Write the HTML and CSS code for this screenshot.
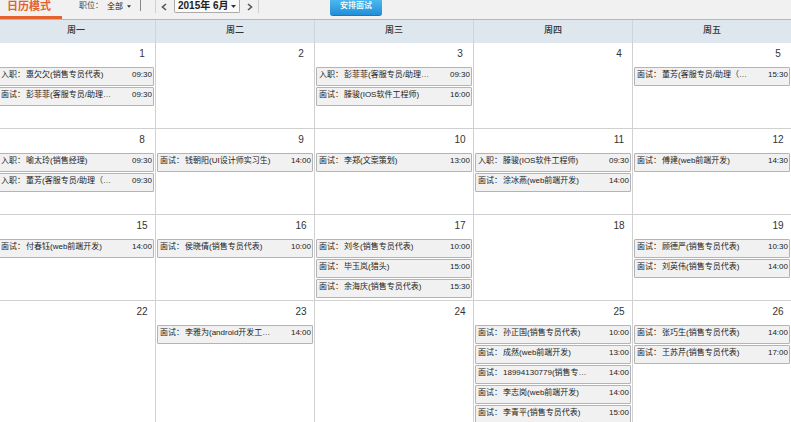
FILE: index.html
```html
<!DOCTYPE html>
<html lang="zh-CN">
<head>
<meta charset="utf-8">
<title>日历模式</title>
<meta name="viewport" content="width=device-width, initial-scale=1">
<link rel="stylesheet" href="styles.css">
</head>
<body>
<header class="toolbar">
  <a class="tab" href="#calendar">日历模式</a>
  <div class="filter">
    <label for="position">职位：</label>
    <span class="picker">
      <select id="position"><option>全部</option></select>
      <svg class="caret" viewBox="0 0 5 3" aria-hidden="true"><path d="M0 0h5L2.500 3z"/></svg>
    </span>
  </div>
  <span class="divider"></span>
  <div class="pager">
    <button class="step prev" type="button" aria-label="上个月"><svg viewBox="0 0 6 8"><path d="M5 1 1.500 4 5 7"/></svg></button>
    <span class="picker month">
      <select aria-label="月份"><option>2015年 6月</option></select>
      <svg class="caret" viewBox="0 0 5 3" aria-hidden="true"><path d="M0 0h5L2.500 3z"/></svg>
    </span>
    <button class="step next" type="button" aria-label="下个月"><svg viewBox="0 0 6 8"><path d="M1 1 4.500 4 1 7"/></svg></button>
  </div>
  <button class="primary" type="button">安排面试</button>
</header>
<main class="sheet" id="calendar">
<table class="calendar">
  <thead>
    <tr><th>周一</th><th>周二</th><th>周三</th><th>周四</th><th>周五</th></tr>
  </thead>
  <tbody>
    <tr>
      <td><div class="day">1</div>
        <div class="event"><span class="kind">入职：</span><span class="who">惠欠欠(销售专员代表)</span><time>09:30</time></div>
        <div class="event"><span class="kind">面试：</span><span class="who">彭菲菲(客服专员/助理…</span><time>09:30</time></div></td>
      <td><div class="day">2</div></td>
      <td><div class="day">3</div>
        <div class="event"><span class="kind">入职：</span><span class="who">彭菲菲(客服专员/助理…</span><time>09:30</time></div>
        <div class="event"><span class="kind">面试：</span><span class="who">滕骏(IOS软件工程师)</span><time>16:00</time></div></td>
      <td><div class="day">4</div></td>
      <td><div class="day">5</div>
        <div class="event"><span class="kind">面试：</span><span class="who">董芳(客服专员/助理（…</span><time>15:30</time></div></td>
    </tr>
    <tr>
      <td><div class="day">8</div>
        <div class="event"><span class="kind">入职：</span><span class="who">喻太玲(销售经理)</span><time>09:30</time></div>
        <div class="event"><span class="kind">入职：</span><span class="who">董芳(客服专员/助理（…</span><time>09:30</time></div></td>
      <td><div class="day">9</div>
        <div class="event"><span class="kind">面试：</span><span class="who">钱朝阳(UI设计师实习生)</span><time>14:00</time></div></td>
      <td><div class="day">10</div>
        <div class="event"><span class="kind">面试：</span><span class="who">李郑(文案策划)</span><time>13:00</time></div></td>
      <td><div class="day">11</div>
        <div class="event"><span class="kind">入职：</span><span class="who">滕骏(IOS软件工程师)</span><time>09:30</time></div>
        <div class="event"><span class="kind">面试：</span><span class="who">涂冰燕(web前端开发)</span><time>14:00</time></div></td>
      <td><div class="day">12</div>
        <div class="event"><span class="kind">面试：</span><span class="who">傅建(web前端开发)</span><time>14:30</time></div></td>
    </tr>
    <tr>
      <td><div class="day">15</div>
        <div class="event"><span class="kind">面试：</span><span class="who">付春钰(web前端开发)</span><time>14:00</time></div></td>
      <td><div class="day">16</div>
        <div class="event"><span class="kind">面试：</span><span class="who">侯晓倩(销售专员代表)</span><time>10:00</time></div></td>
      <td><div class="day">17</div>
        <div class="event"><span class="kind">面试：</span><span class="who">刘冬(销售专员代表)</span><time>10:00</time></div>
        <div class="event"><span class="kind">面试：</span><span class="who">毕玉岚(猎头)</span><time>15:00</time></div>
        <div class="event"><span class="kind">面试：</span><span class="who">余海庆(销售专员代表)</span><time>15:30</time></div></td>
      <td><div class="day">18</div></td>
      <td><div class="day">19</div>
        <div class="event"><span class="kind">面试：</span><span class="who">顾德严(销售专员代表)</span><time>10:30</time></div>
        <div class="event"><span class="kind">面试：</span><span class="who">刘英伟(销售专员代表)</span><time>14:00</time></div></td>
    </tr>
    <tr>
      <td><div class="day">22</div></td>
      <td><div class="day">23</div>
        <div class="event"><span class="kind">面试：</span><span class="who">李雅为(android开发工…</span><time>14:00</time></div></td>
      <td><div class="day">24</div></td>
      <td><div class="day">25</div>
        <div class="event"><span class="kind">面试：</span><span class="who">孙正国(销售专员代表)</span><time>10:00</time></div>
        <div class="event"><span class="kind">面试：</span><span class="who">成然(web前端开发)</span><time>13:00</time></div>
        <div class="event"><span class="kind">面试：</span><span class="who">18994130779(销售专…</span><time>14:00</time></div>
        <div class="event"><span class="kind">面试：</span><span class="who">李志岗(web前端开发)</span><time>14:00</time></div>
        <div class="event"><span class="kind">面试：</span><span class="who">李青平(销售专员代表)</span><time>15:00</time></div></td>
      <td><div class="day">26</div>
        <div class="event"><span class="kind">面试：</span><span class="who">张巧生(销售专员代表)</span><time>14:00</time></div>
        <div class="event"><span class="kind">面试：</span><span class="who">王苏芹(销售专员代表)</span><time>17:00</time></div></td>
    </tr>
  </tbody>
</table>
</main>
</body>
</html>
```
FILE: styles.css
```css
* { box-sizing: border-box; }

body {
  margin: 0;
  height: 100vh;
  overflow: hidden;
  background: #fff;
  color: #222;
  font: 8px/12px "Liberation Sans", "Noto Sans CJK SC", sans-serif;
}

button, select {
  margin: 0;
  padding: 0;
  border: 0;
  background: none;
  color: inherit;
  font: inherit;
  appearance: none;
}

/* Toolbar */
.toolbar {
  display: flex;
  align-items: flex-start;
  height: 20px;
  background: #f1f1f1;
  border-bottom: 1px solid #b5b8ba;
}

.tab {
  width: 62px;
  height: 19px;
  padding-left: 7px;
  border-bottom: 3px solid #e4622d;
  color: #e4622d;
  font-size: 11px;
  font-weight: 700;
  line-height: 12px;
  text-decoration: none;
  white-space: nowrap;
}

.filter {
  display: flex;
  margin-left: 17px;
  color: #444;
}

.filter label { width: 28px; }

.picker {
  display: flex;
  align-items: center;
  gap: 4px;
  height: 13px;
  color: #222;
}

.caret {
  width: 4px;
  height: 3px;
  fill: #333;
}

.divider {
  width: 1px;
  height: 11px;
  margin-left: 9px;
  background: #888;
}

.pager {
  display: flex;
  margin-left: 14px;
}

.step {
  display: flex;
  align-items: center;
  justify-content: center;
  width: 17px;
  height: 13px;
}

.prev { border-left: 1px solid #d0d0d0; }

.next { border-right: 1px solid #d0d0d0; }

.step svg {
  width: 6px;
  height: 8px;
  fill: none;
  stroke: #555;
  stroke-width: 1.6;
}

.month {
  gap: 2px;
  margin: 0 2px;
  padding: 0 3px;
  border: 1px solid #aaa;
  border-top: 0;
  border-radius: 0 0 2px 2px;
  background: #fafafa;
  font-size: 10px;
  font-weight: 700;
}

.month .caret { width: 5px; }

.primary {
  width: 52px;
  height: 16px;
  margin-left: 71px;
  padding-bottom: 4px;
  border-bottom: 1px solid #1878b8;
  border-radius: 0 0 3px 3px;
  background: linear-gradient(#4bb7ef, #228fd9);
  color: #fff;
  font-weight: 500;
}

/* Month grid, scrolled slightly past its left edge */
.sheet { margin-left: -4px; }

.calendar {
  width: 100%;
  table-layout: fixed;
  border-collapse: separate;
  border-spacing: 0;
}

.calendar th {
  height: 23px;
  padding: 4px 0 7px;
  border-left: 1px solid #cdd5dc;
  background: #dfe7ee;
  color: #333;
  font-size: 9px;
  font-weight: 500;
}

.calendar td {
  height: 86px;
  padding: 0 1px;
  border-left: 1px solid #d0d0d0;
  border-bottom: 1px solid #d0d0d0;
  vertical-align: top;
}

.day {
  width: 24px;
  height: 24px;
  margin-left: auto;
  padding-top: 5px;
  color: #333;
  font-size: 10px;
  text-align: center;
}

.event {
  display: flex;
  height: 19px;
  margin-bottom: 1px;
  padding: 1px 1px 4px 2px;
  border: 1px solid #b4b4b4;
  border-radius: 1px;
  background: #f1f1f1;
  white-space: nowrap;
}

.kind { width: 25px; }

.who { flex: 1; }
```
